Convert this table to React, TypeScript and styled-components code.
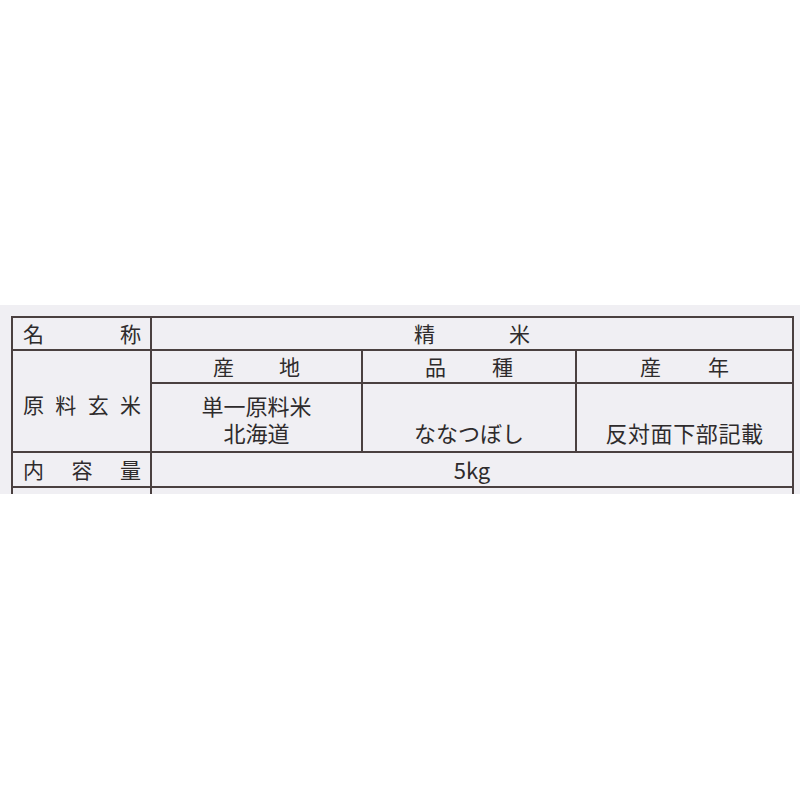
import React from "react";
import styled, { createGlobalStyle } from "styled-components";

const Global = createGlobalStyle`
  html, body { margin: 0; padding: 0; background: #ffffff; }
  body { font-family: "Noto Sans CJK JP", "Noto Sans", sans-serif; }
`;

const Page = styled.div`
  width: 800px;
  height: 800px;
  padding-top: 305px;
  box-sizing: border-box;
  background: #ffffff;
  overflow: hidden;
`;

const Strip = styled.div`
  height: 189px;
  background: #f0eff3;
  padding: 11px 0 0 11px;
  box-sizing: border-box;
  overflow: hidden;
`;

const Table = styled.div`
  display: inline-grid;
  grid-template-columns: 137px 209px 212px 215px;
  grid-template-rows: 31px 31px 67px 33px 40px;
  gap: 2px;
  padding: 2px;
  background: #4a4040;
  color: #2e2b2c;
  font-family: "Noto Sans CJK JP", sans-serif;
  font-size: 22px;
  line-height: 27px;
`;

const Cell = styled.div<{ $col?: string; $row?: string }>`
  background: #f0eff3;
  grid-column: ${(p) => p.$col ?? "auto"};
  grid-row: ${(p) => p.$row ?? "auto"};
  display: flex;
  align-items: center;
  justify-content: center;
`;

const LabelCell = styled(Cell)<{ $shift?: number }>`
  font-size: 21px;
  justify-content: space-between;
  padding: ${(p) => p.$shift ?? 0}px 9px 0 10px;
`;

const Spread = styled(Cell)<{ $gap: number }>`
  font-size: 21px;
  gap: ${(p) => p.$gap}px;
`;

const ValueCell = styled(Cell)`
  flex-direction: column;
  justify-content: flex-end;
  padding-bottom: 5px;
  box-sizing: border-box;
`;

const Line = styled.span<{ $spacing?: number }>`
  display: block;
  white-space: nowrap;
  letter-spacing: ${(p) => p.$spacing ?? 0}px;
`;

const spread = (s: string) => s.split("").map((c, i) => <span key={i}>{c}</span>);

export default function App() {
  return (
    <>
      <Global />
      <Page>
        <Strip>
          <Table>
            <LabelCell $col="1" $row="1">{spread("名称")}</LabelCell>
            <Spread $col="2 / 5" $row="1" $gap={74}>{spread("精米")}</Spread>

            <LabelCell $col="1" $row="2 / 4" $shift={6}>{spread("原料玄米")}</LabelCell>
            <Spread $col="2" $row="2" $gap={45}>{spread("産地")}</Spread>
            <Spread $col="3" $row="2" $gap={46}>{spread("品種")}</Spread>
            <Spread $col="4" $row="2" $gap={47}>{spread("産年")}</Spread>

            <ValueCell $col="2" $row="3">
              <Line>単一原料米</Line>
              <Line>北海道</Line>
            </ValueCell>
            <ValueCell $col="3" $row="3">
              <Line>ななつぼし</Line>
            </ValueCell>
            <ValueCell $col="4" $row="3">
              <Line $spacing={0.6}>反対面下部記載</Line>
            </ValueCell>

            <LabelCell $col="1" $row="4">{spread("内容量")}</LabelCell>
            <Cell $col="2 / 5" $row="4">5kg</Cell>

            <Cell $col="1" $row="5" />
            <Cell $col="2 / 5" $row="5" />
          </Table>
        </Strip>
      </Page>
    </>
  );
}
